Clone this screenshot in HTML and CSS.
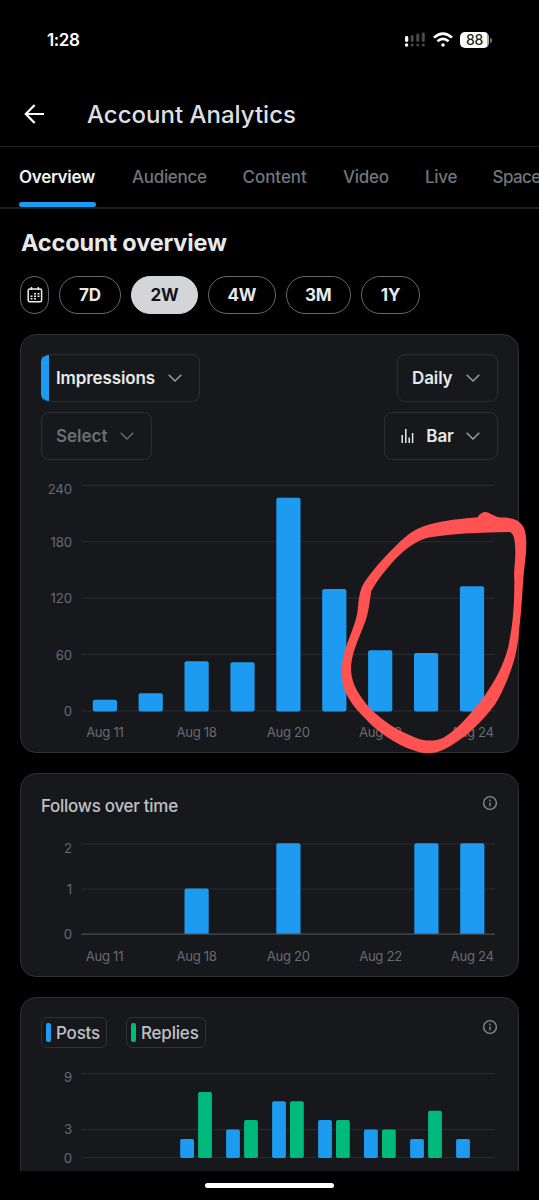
FILE: index.html
```html
<!DOCTYPE html>
<html lang="en">
<head>
<meta charset="utf-8">
<title>Account Analytics</title>
<link rel="stylesheet" href="styles.css">
</head>
<body>
<div class="screen">
  <div class="status">
    <span class="time">1:28</span>
    <div class="status-icons">
      <svg width="20" height="16" viewBox="0 0 20 16" fill="#4a4a4a"><g fill="#fff"><rect x="0" y="4" width="3.3" height="6" rx="1.4"/><circle cx="1.6" cy="13" r="1.7"/></g><rect x="5.6" y="3" width="3" height="7" rx="1.4"/><rect x="11.3" y="1.5" width="3" height="8.5" rx="1.4"/><rect x="16.8" y="0.5" width="3" height="9.5" rx="1.4"/><circle cx="7.1" cy="13" r="1.5"/><circle cx="12.8" cy="13" r="1.5"/><circle cx="18.3" cy="13" r="1.5"/></svg>
      <svg class="wifi" width="20" height="16" viewBox="0 0 20 16" fill="none" stroke="#fff" stroke-width="2.6"><path d="M1 5.6Q10-2.4 19 5.6M4.4 9.3Q10 4.6 15.6 9.3"/><circle cx="10" cy="13" r="1.8" fill="#fff" stroke="none"/></svg>
      <span class="battery">88</span><span class="battery-tip"></span>
    </div>
  </div>
  <header class="app-bar">
    <svg class="back" width="20" height="20" viewBox="0 0 20 20" fill="none" stroke="#fff" stroke-width="2.2"><path d="M10.6 1 1.8 10l8.8 9M2 10h18"/></svg>
    <h1>Account Analytics</h1>
  </header>
  <nav class="tabs">
    <a class="tab active">Overview</a><a class="tab audience">Audience</a><a class="tab content">Content</a><a class="tab video">Video</a><a class="tab live">Live</a><a class="tab spaces">Spaces</a>
  </nav>
  <main>
    <h2>Account overview</h2>
    <div class="ranges">
      <button class="pill calendar"><svg width="16" height="16" viewBox="0 0 16 16" fill="none" stroke="#eee" stroke-width="1.5"><rect x="1.2" y="2" width="13.4" height="12.8" rx="1.5"/><path d="M4.5 0v3M11.3 0v3" /><path d="M7 6.7h2M10.5 6.7h2M3.5 9.2h2M7 9.2h2M10.5 9.2h2M3.5 11.8h2M7 11.8h2" stroke-width="1.6"/></svg></button>
      <button class="pill d7">7D</button><button class="pill w2 selected">2W</button><button class="pill w4">4W</button><button class="pill m3">3M</button><button class="pill y1">1Y</button>
    </div>

    <section class="card impressions">
      <div class="controls">
        <button class="select metric"><span>Impressions</span><svg class="chev" viewBox="0 0 14 8"><path d="M.7.7 7 7l6.3-6.3"/></svg></button>
        <button class="select daily"><span>Daily</span><svg class="chev" viewBox="0 0 14 8"><path d="M.7.7 7 7l6.3-6.3"/></svg></button>
      </div>
      <div class="controls">
        <button class="select empty"><span>Select</span><svg class="chev" viewBox="0 0 14 8"><path d="M.7.7 7 7l6.3-6.3"/></svg></button>
        <button class="select kind"><svg class="bars" width="13" height="14" viewBox="0 0 13 14" stroke="#e7e9ea" stroke-width="1.5"><path d="M1.2 6v8M4.8 0v14M8.2 8.4V14M11.6 4v10"/></svg><span>Bar</span><svg class="chev" viewBox="0 0 14 8"><path d="M.7.7 7 7l6.3-6.3"/></svg></button>
      </div>
      <svg class="chart" width="497" height="292" viewBox="21 460 497 292">
        <path class="grid" d="M81.5 485.5H495M81.5 541.8H495M81.5 598H495M81.5 654.5H495M81.5 711H495"/>
        <g class="ylabels"><text x="72" y="493.7">240</text><text x="72" y="546.7">180</text><text x="72" y="603">120</text><text x="72" y="659.7">60</text><text x="72" y="716">0</text></g>
        <g class="blue">
          <rect x="92.8" y="699.7" width="24.2" height="11.8" rx="2"/><rect x="138.6" y="693.3" width="24.2" height="18.2" rx="2"/><rect x="184.5" y="661.2" width="24.2" height="50.3" rx="2"/><rect x="230.4" y="662.2" width="24.2" height="49.3" rx="2"/><rect x="276.3" y="497.7" width="24.2" height="213.8" rx="2"/><rect x="322.2" y="589" width="24.2" height="122.5" rx="2"/><rect x="368.1" y="650.2" width="24.2" height="61.3" rx="2"/><rect x="414" y="653" width="24.2" height="58.5" rx="2"/><rect x="459.9" y="586.2" width="24.2" height="125.3" rx="2"/>
        </g>
        <g class="xlabels"><text x="104.8" y="737">Aug 11</text><text x="196.6" y="737">Aug 18</text><text x="288.3" y="737">Aug 20</text><text x="380.3" y="737">Aug 22</text><text x="472.3" y="737">Aug 24</text></g>
      </svg>
    </section>

    <section class="card follows">
      <div class="card-head">
        <h3>Follows over time</h3>
        <svg class="info" width="16" height="16" viewBox="0 0 16 16"><circle cx="8" cy="8" r="6.4"/><path d="M8 7.4v3.8M8 4.6v1.7"/></svg>
      </div>
      <svg class="chart" width="497" height="151" viewBox="21 825 497 151">
        <path class="grid" d="M81.5 844H495M81.5 889H495"/>
        <g class="ylabels"><text x="72" y="852.5">2</text><text x="72" y="894">1</text><text x="72" y="939">0</text></g>
        <g class="blue"><path d="M184.5 934V890.5q0-2 2-2h20.2q2 0 2 2V934zM276.3 934V845.3q0-2 2-2h20.2q2 0 2 2V934zM414.3 934V845.3q0-2 2-2h20.2q2 0 2 2V934zM460.2 934V845.3q0-2 2-2h20.2q2 0 2 2V934z"/></g>
        <path class="axis" d="M81.5 934.2H495"/>
        <g class="xlabels"><text x="104.5" y="960.5">Aug 11</text><text x="196.6" y="960.5">Aug 18</text><text x="288.3" y="960.5">Aug 20</text><text x="380.5" y="960.5">Aug 22</text><text x="472.3" y="960.5">Aug 24</text></g>
      </svg>
    </section>

    <section class="card activity">
      <div class="card-head">
        <div class="legend"><span class="key posts"><i></i>Posts</span><span class="key replies"><i></i>Replies</span></div>
        <svg class="info" width="16" height="16" viewBox="0 0 16 16"><circle cx="8" cy="8" r="6.4"/><path d="M8 7.4v3.8M8 4.6v1.7"/></svg>
      </div>
      <svg class="chart" width="497" height="121" viewBox="21 1050 497 121">
        <path class="grid" d="M81.5 1073.5H495M81.5 1129.5H495M81.5 1157.6H495"/>
        <g class="ylabels"><text x="72" y="1082">9</text><text x="72" y="1134.3">3</text><text x="72" y="1162.8">0</text></g>
        <g class="blue"><rect x="180.2" y="1139" width="13.8" height="19" rx="1.8"/><rect x="226.1" y="1129.5" width="13.8" height="28.5" rx="1.8"/><rect x="272.1" y="1101.2" width="13.8" height="56.8" rx="1.8"/><rect x="318.1" y="1120" width="13.8" height="38" rx="1.8"/><rect x="364" y="1129.5" width="13.8" height="28.5" rx="1.8"/><rect x="410.1" y="1139" width="13.8" height="19" rx="1.8"/><rect x="456.1" y="1139" width="13.8" height="19" rx="1.8"/></g>
        <g class="green"><rect x="198.1" y="1092" width="13.8" height="66" rx="1.8"/><rect x="244.1" y="1120" width="13.8" height="38" rx="1.8"/><rect x="290" y="1101.2" width="13.8" height="56.8" rx="1.8"/><rect x="336" y="1120" width="13.8" height="38" rx="1.8"/><rect x="382" y="1129.5" width="13.8" height="28.5" rx="1.8"/><rect x="428.1" y="1110.8" width="13.8" height="47.2" rx="1.8"/></g>
      </svg>
    </section>
  </main>
  <div class="home"><span></span></div>
  <svg class="scribble" width="539" height="1200" viewBox="0 0 539 1200"><path transform="translate(270 475) scale(.33333)" fill="#ff5252" fill-rule="evenodd" d="M623 127C634 108 650 108 662 117L685 127C715 128 735 130 750 143C765 157 769 175 769 205C769 240 764 265 761 300C757 350 755 400 748 460C743 535 725 585 705 630C692 660 680 685 662 705C620 758 570 800 520 824C490 838 460 838 430 826C380 810 320 770 285 730C250 695 230 665 220 635C210 590 215 550 232 505C250 455 262 430 264 395C267 360 272 335 290 312C320 270 350 240 380 210C410 180 440 158 480 148C530 135 580 131 623 127ZM685 172C620 173 550 177 480 187C440 195 410 220 380 248C350 280 325 310 304 348C297 390 297 415 280 455C262 500 243 540 243 585C245 630 270 665 300 700C340 740 380 765 430 785C460 798 490 802 520 788C560 765 600 720 642 665C680 610 700 570 715 515C728 450 733 400 733 320C731 290 735 270 736 235C736 200 733 177 720 171Z"/></svg>
</div>
</body>
</html>
```

FILE: styles.css
```css
* { box-sizing: border-box; }
body { margin: 0; background: #000; color: #e7e9ea; font-family: Inter, "Liberation Sans", sans-serif; }
h1, h2, h3 { margin: 0; }
svg { display: block; flex: none; }
button { font: inherit; color: inherit; background: none; padding: 0; margin: 0; }
.screen { position: relative; width: 539px; height: 1200px; overflow: hidden; display: flex; flex-direction: column; background: #000; }

.status { height: 80px; flex: none; display: flex; align-items: center; justify-content: space-between; padding: 0 47px 0 47px; }
.time { font-size: 17px; font-weight: 600; color: #fff; letter-spacing: -.4px; }
.status-icons { display: flex; align-items: center; }
.wifi { margin: 0 7px 0 8px; }
.battery { width: 29px; height: 16px; border-radius: 5px; background: linear-gradient(90deg, #fff 26.5px, #aaa 26.5px); color: #222; font-size: 14px; font-weight: 500; line-height: 16px; text-align: center; letter-spacing: -.4px; }
.battery-tip { width: 2px; height: 5px; margin-left: 1px; background: #777; border-radius: 0 2px 2px 0; }

.app-bar { height: 67px; flex: none; display: flex; align-items: center; padding: 2px 0 0 24px; border-bottom: 1px solid #202124; }
.back { margin: -1px 43px 0 0; }
.app-bar h1 { font-size: 24px; line-height: 30px; font-weight: 500; color: #dedfe0; padding-top: 2px; }
.tabs { height: 61.5px; flex: none; display: flex; padding-left: 19px; border-bottom: 2px solid #202124; white-space: nowrap; }
.tab { height: 60px; flex: none; line-height: 60px; font-size: 17px; font-weight: 500; color: #71767b; letter-spacing: -.3px; }
.tab.active { width: 77px; margin-right: 36px; color: #f3f3f3; font-weight: 600; display: flex; flex-direction: column; }
.tab.active::after { content: ""; height: 5px; flex: none; margin-top: -5px; border-radius: 3px; background: #1d9bf0; }
.audience { width: 110.5px; }
.content { width: 100.5px; letter-spacing: -.05px; }
.video { width: 82px; }
.live { width: 67.5px; }
.spaces { letter-spacing: -.6px; }

main { flex: 1; min-height: 0; overflow: hidden; padding: 0 20px; display: flex; flex-direction: column; }
h2 { flex: none; height: 67.5px; line-height: 68px; font-size: 23.5px; font-weight: 700; padding-left: 1px; letter-spacing: -.15px; }
.ranges { flex: none; display: flex; gap: 10px; height: 38px; margin-bottom: 20px; }
.pill { height: 38px; border: 1px solid #65686c; border-radius: 19px; font-size: 17px; font-weight: 700; display: flex; align-items: center; justify-content: center; letter-spacing: -.2px; }
.calendar { width: 29px; border-radius: 14px; }
.d7 { width: 62px; } .w2 { width: 67px; } .w4 { width: 67.5px; } .m3 { width: 65.5px; } .y1 { width: 59px; }
.selected { background: #d4d5d7; border-color: #d4d5d7; color: #0f1419; }

.card { width: 499px; flex: none; background: #17181c; border: 1px solid #303136; border-radius: 16px; overflow: hidden; }
.impressions { height: 419px; margin-bottom: 20px; padding-top: 19px; }
.controls { display: flex; justify-content: space-between; height: 48px; margin: 0 20px 10px; }
.controls + .controls { margin-bottom: 0; }
.select { height: 48px; border: 1px solid #2c2d31; border-radius: 8px; font-size: 17px; font-weight: 600; display: flex; align-items: center; padding: 0 17px 0 14px; justify-content: space-between; letter-spacing: -.12px; }
.metric { width: 159px; background: linear-gradient(90deg, #1d9bf0 7px, transparent 7px); border-left-color: #1d9bf0; }
.daily { width: 101px; } .empty { width: 111px; color: #6b6e73; letter-spacing: 0; } .kind { width: 114px; }
.kind { padding-left: 16px; }
.chev { width: 14px; height: 8px; fill: none; stroke: #a0a3a7; stroke-width: 1.3; }
.empty .chev { stroke: #6b6e73; }

.grid { stroke: #2b2d31; stroke-width: 1; }
.axis { stroke: #4b4d51; stroke-width: 1.2; }
.blue { fill: #1d9bf0; }
.green { fill: #00ba7c; }
.ylabels, .xlabels { fill: #686b70; font-size: 13.2px; }
.ylabels { text-anchor: end; letter-spacing: -.1px; }
.xlabels { text-anchor: middle; letter-spacing: -.35px; }

.follows { height: 204px; margin-bottom: 20px; }
.card-head { display: flex; justify-content: space-between; height: 51px; padding: 21px 20px 0; }
.card-head h3 { font-size: 17px; line-height: 22px; font-weight: 500; color: #bfc1c5; letter-spacing: -.28px; }
.info { fill: none; stroke: #85888d; stroke-width: 1.4; }
.activity { height: 200px; }
.activity .card-head { height: 52px; padding-top: 19px; }
.activity .info { margin-top: 2px; }
.legend { display: flex; gap: 19px; }
.key { height: 31px; border: 1px solid #303136; border-radius: 6px; display: flex; align-items: center; font-size: 17px; font-weight: 500; color: #bfc1c5; padding-left: 4px; gap: 5px; letter-spacing: -.2px; }
.key i { width: 5px; height: 19px; border-radius: 2px; background: #1d9bf0; }
.posts { width: 66px; } .replies { width: 80px; }
.replies i { background: #00ba7c; }

.home { height: 29px; flex: none; display: flex; justify-content: center; padding-top: 12px; }
.home span { width: 129px; height: 4.5px; border-radius: 3px; background: #fff; }
.scribble { position: absolute; left: 0; top: 0; pointer-events: none; }
```
